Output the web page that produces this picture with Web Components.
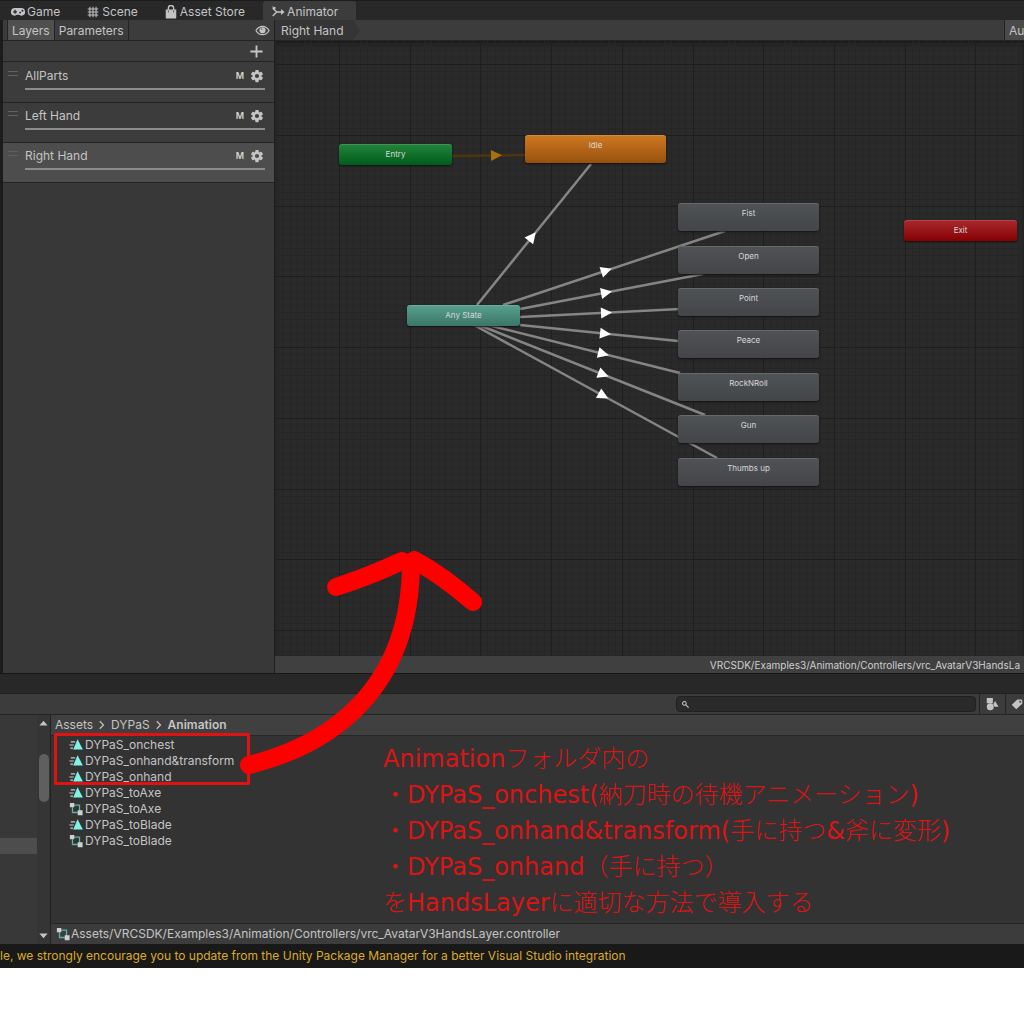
<!DOCTYPE html>
<html lang="en">
<head>
<meta charset="utf-8">
<title>Animator</title>
<style>
  html, body { margin: 0; background: #fff; }
  body { font: 12px/16px Inter, "Liberation Sans", sans-serif; color: #c4c4c4; overflow-x: hidden; }
</style>
</head>
<body>
<editor-window></editor-window>

<script>
const reset = `
  *, *::before, *::after { box-sizing: border-box; }
  button, input { font: inherit; color: inherit; background: none; border: 0; padding: 0; margin: 0; border-radius: 0; outline: 0; }
  a { color: inherit; text-decoration: none; }
`;
function define(name, css, html, setup) {
  const template = document.createElement('template');
  template.innerHTML = `<style>${reset}${css}</style>${html}`;
  customElements.define(name, class extends HTMLElement {
    constructor() {
      super();
      this.attachShadow({ mode: 'open' }).append(template.content.cloneNode(true));
    }
    connectedCallback() { if (setup) setup(this, this.shadowRoot); }
  });
}

/* Icons, all on a 16 x 16 field */
const teeth = [0, 60, 120, 180, 240, 300].map(a =>
  `<rect x="6" y="1" width="4" height="4" rx="1" transform="rotate(${a} 8 8)"/>`).join('');
const icons = {
  game: '<path fill-rule="evenodd" d="M4.500 3.500h7a4.400 4.400 0 0 1 1.500 8.600c-1.800.5-2.800-1.100-3.800-1.100H6.800c-1 0-2 1.600-3.800 1.100A4.400 4.400 0 0 1 4.500 3.500zM3.900 5.500v1.500H2.400v1.500h1.500V10h1.500V8.500h1.500V7H5.400V5.500zM9.400 8.700a1.100 1.100 0 1 0 2.200 0 1.100 1.100 0 0 0-2.200 0zM12 6.500a1.100 1.100 0 1 0 2.200 0 1.100 1.100 0 0 0-2.200 0z"/>',
  grid: '<path d="M4.500 2v12M11.500 2v12M8 2v12M2 4.500h12M2 11.500h12M2 8h12" fill="none" stroke="currentColor" stroke-width="1.200"/>',
  bag: '<path d="M2 5h12v9.500a1 1 0 0 1-1 1H3a1 1 0 0 1-1-1z"/><path d="M5 6V3.500a3 3 0 0 1 6 0V6" fill="none" stroke="currentColor" stroke-width="1.600"/><path d="M5 6v2.500M11 6v2.500" stroke="#555"/>',
  animator: '<path d="M2 3.500L6.500 8 2 12.500M6.500 8H14" fill="none" stroke="currentColor" stroke-width="1.600"/><path d="M1.500 1.500L6 3 3 6zM11.500 4.500L15.500 8l-4 3.500z"/>',
  eye: '<path d="M1 8c3.500-6 10.500-6 14 0-3.500 6-10.500 6-14 0z" fill="none" stroke="currentColor" stroke-width="1.300"/><circle cx="8" cy="7.700" r="3.300"/><circle cx="7" cy="6.500" r="1" fill="#777"/>',
  plus: '<path d="M8 1.500v13M1.500 8h13" stroke="currentColor" stroke-width="2"/>',
  gear: teeth + '<circle cx="8" cy="8" r="3.700" fill="none" stroke="currentColor" stroke-width="2.600"/>',
  search: '<circle cx="6" cy="6" r="3.300" fill="none" stroke="currentColor" stroke-width="1.800"/><path d="M8.500 8.500l5 5" stroke="currentColor" stroke-width="2"/>',
  shapes: '<path d="M2 1h7v6H2zM11.500 4.500L15.500 11h-4.700L9.500 8z"/><circle cx="6" cy="11" r="4"/>',
  tag: '<path fill-rule="evenodd" d="M8.500 2h5.500l1 1v4.500L7 15 1 9zM11 5a1.200 1.200 0 1 0 2.400 0 1.200 1.200 0 0 0-2.400 0z"/>',
  clip: '<path d="M9.800 1.500L15.800 13H4.800z" fill="#7df5df"/><path d="M2 4.500h5M.5 8h5M1.500 11.500h3" stroke="#c9c9c9" stroke-width="1.300"/>',
  controller: '<path d="M5 3.500h7v7M4 6v6h7" fill="none" stroke="#58b5a5" stroke-width="1.500"/><path d="M1 1h5v5H1zM10 9.500h5.500v5.500H10z" fill="#d0d0d0"/>',
  up: '<path d="M8 4l6 7H2z"/>',
  down: '<path d="M8 12l6-7H2z"/>',
  chevron: '<path d="M5 3l5 5-5 5" fill="none" stroke="currentColor" stroke-width="1.600"/>'
};
define('ed-icon',
  `:host { display: inline-flex; flex: none; width: var(--size, 14px); height: var(--size, 14px); }
   svg { width: 100%; height: 100%; fill: currentColor; }`,
  '<svg viewBox="0 0 16 16" aria-hidden="true"></svg>',
  (el, root) => { root.querySelector('svg').innerHTML = icons[el.getAttribute('name')] || ''; });

const placeIcon = (el, root) => {
  root.querySelector('.icon').innerHTML = `<ed-icon name="${el.getAttribute('icon')}"></ed-icon>`;
};

define('dock-tab',
  `:host { display: block; padding-top: 1px; }
   button { display: flex; align-items: center; gap: 2px; height: 20px; padding: 2px 18px 0 8px; border-radius: 3px 3px 0 0; font-size: 12px; white-space: nowrap; }
   .icon { display: flex; }
   :host([selected]) button { background: #3c3c3c; }`,
  '<button type="button" role="tab"><span class="icon"></span><slot></slot></button>',
  (el, root) => {
    placeIcon(el, root);
    root.querySelector('button').setAttribute('aria-selected', el.hasAttribute('selected'));
  });

define('layer-row',
  `:host { display: flex; height: 40px; padding: 4px 9px 0 5px; gap: 7px; background: #3c3c3c; border-bottom: 1px solid #242424; }
   :host([selected]) { background: #4d4d4d; }
   .grip { width: 10px; height: 5px; margin-top: 4px; border: solid #606060; border-width: 1px 0; }
   .body { flex: 1; border-bottom: 2px solid #8c8c8c; height: 23px; }
   .line { display: flex; align-items: center; gap: 6px; height: 18px; }
   .name { flex: 1; font-size: 12px; }
   abbr { font-size: 9px; font-weight: 600; text-decoration: none; color: #d6d6d6; }
   button { display: flex; margin-right: 1px; }`,
  `<span class="grip"></span>
   <div class="body"><div class="line"><span class="name"><slot></slot></span><abbr>M</abbr>
   <button type="button" aria-label="Layer settings"><ed-icon name="gear"></ed-icon></button></div></div>`);

define('layers-panel',
  `:host { display: flex; flex-direction: column; flex: none; width: 275px; background: #383838; border-left: 3px solid #1c1c1c; border-right: 1px solid #1e1e1e; }
   header { display: flex; height: 21px; background: #3c3c3c; border-bottom: 1px solid #242424; padding: 0 4px; }
   header .tab { padding: 1px 4px 0; border-right: 1px solid #242424; font-size: 12px; }
   header .tab.on { background: #505050; border-left: 1px solid #242424; }
   header .eye { display: flex; align-items: center; margin-left: auto; }
   .add { display: flex; justify-content: flex-end; align-items: center; height: 21px; padding-right: 10px; background: #3c3c3c; border-bottom: 1px solid #242424; }
   .add button { display: flex; }
   .rows { padding-top: 1px; background: #3c3c3c; }
   ed-icon { --size: 15px; }`,
  `<header><button type="button" class="tab on">Layers</button><button type="button" class="tab">Parameters</button>
     <button type="button" class="eye" aria-label="Toggle visibility"><ed-icon name="eye"></ed-icon></button></header>
   <div class="add"><button type="button" aria-label="Add layer"><ed-icon name="plus"></ed-icon></button></div>
   <div class="rows"><layer-row>AllParts</layer-row><layer-row>Left Hand</layer-row><layer-row selected>Right Hand</layer-row></div>`);

define('state-node',
  `:host { position: absolute; left: var(--x); top: var(--y); width: 141px; height: 28px; padding-top: 5px; border-radius: 3px; text-align: center; font-size: 8px; line-height: 10px; color: #d8d8d8;
     background: linear-gradient(#505356, #434548); box-shadow: 0 1px 2px #111, inset 0 1px 0 #ffffff22; box-sizing: border-box; }
   :host([kind]) { width: 113px; height: 21px; }
   :host([kind=entry]) { background: linear-gradient(#23843b, #005c1c); }
   :host([kind=any]) { background: linear-gradient(#58a18e, #3b7568); }
   :host([kind=exit]) { background: linear-gradient(#a82a2d, #860003); }
   :host([default]) { background: linear-gradient(#cf7921, #97510e); }`,
  '<slot></slot>');

define('graph-wires',
  ':host { display: block; height: 100%; } svg { display: block; width: 100%; height: 100%; }',
  '<svg aria-hidden="true"></svg>',
  (el, root) => {
    const rule = (n, from, step, skip) => {
      const out = [];
      for (let i = -n; i < n; i++) if (!skip || i % 10) out.push(Math.round(from + i * step));
      return out;
    };
    const grid = (list, dir) => list.filter(v => v >= 0).map(v => dir === 'v' ? `M${v} 0v3000` : `M0 ${v}h4000`).join('');
    const path = (step, n, skip) => grid(rule(n, 64, step, skip), 'v') + grid(rule(n, 94, step, skip), 'h');
    const wires = [
      [202, 264, 316, 123, 257], [228, 264, 450, 190, 331], [245, 268, 428, 233, 331],
      [245, 276, 405, 268, 331], [245, 284, 403, 300, 330], [213, 284, 405, 332, 328],
      [204, 284, 430, 374, 328], [199, 284, 442, 417, 328], [177, 115, 250, 114, 221]
    ];
    const drawn = wires.map(([x1, y1, x2, y2, ax], i) => {
      const t = (ax - x1) / (x2 - x1), ay = y1 + (y2 - y1) * t;
      const a = Math.atan2(y2 - y1, x2 - x1) * 180 / Math.PI;
      const entry = i === wires.length - 1;
      return `<path d="M${x1} ${y1}L${x2} ${y2}" stroke="${entry ? '#4d360b' : '#858585'}" stroke-width="2.500"/>
        <path d="M-5-5.500L6 0-5 5.500z" fill="${entry ? '#a8710f' : '#fff'}" transform="translate(${ax} ${ay}) rotate(${a})"/>`;
    }).join('');
    root.querySelector('svg').innerHTML =
      `<g fill="none" shape-rendering="crispEdges">
        <path d="${path(7.07, 500, true)}" stroke="#262626"/>
        <path d="${path(70.7, 50, false)}" stroke="#1e1e1e"/></g>${drawn}`;
  });

define('state-graph',
  `:host { display: flex; flex-direction: column; flex: 1; min-width: 0; }
   header { display: flex; height: 21px; background: #3c3c3c; border-bottom: 1px solid #242424; }
   .crumb { display: flex; align-items: center; padding: 1px 20px 0 6px; background: #353535; clip-path: polygon(0 0, 78px 0, 85px 50%, 78px 100%, 0 100%); }
   .auto { margin-left: auto; width: 20px; padding: 1px 0 0 4px; text-align: left; background: #4a4a4a; border-left: 1px solid #242424; white-space: nowrap; }
   .canvas { position: relative; height: 615px; overflow: hidden; background: #2a2a2a; box-shadow: inset 0 3px 4px #1b1b1b; }
   footer { height: 17px; background: #404040; font-size: 10px; line-height: 18px; text-align: right; padding-right: 4px; white-space: nowrap; color: #cfcfcf; }`,
  `<header><a class="crumb" href="#right-hand">Right Hand</a><button type="button" class="auto">Au</button></header>
   <div class="canvas"><graph-wires></graph-wires>
     <state-node kind="entry" style="--x:64px;--y:103px">Entry</state-node>
     <state-node default style="--x:250px;--y:94px">Idle</state-node>
     <state-node kind="any" style="--x:132px;--y:264px">Any State</state-node>
     <state-node style="--x:403px;--y:162px">Fist</state-node>
     <state-node style="--x:403px;--y:205px">Open</state-node>
     <state-node style="--x:403px;--y:247px">Point</state-node>
     <state-node style="--x:403px;--y:289px">Peace</state-node>
     <state-node style="--x:403px;--y:332px">RockNRoll</state-node>
     <state-node style="--x:403px;--y:374px">Gun</state-node>
     <state-node style="--x:403px;--y:417px">Thumbs up</state-node>
     <state-node kind="exit" style="--x:629px;--y:179px">Exit</state-node>
   </div>
   <footer>VRCSDK/Examples3/Animation/Controllers/vrc_AvatarV3HandsLa</footer>`);

define('asset-row',
  `:host { display: flex; align-items: center; gap: 2px; height: 16px; padding-left: 18px; font-size: 12px; white-space: nowrap; }
   .icon { display: flex; }`,
  '<span class="icon"></span><slot></slot>', placeIcon);

define('project-panel',
  `:host { display: block; background: #333; border-top: 1px solid #171717; }
   .strip { height: 20px; background: #282828; border-bottom: 1px solid #202020; }
   .tools { display: flex; justify-content: flex-end; align-items: center; height: 21px; background: #3c3c3c; border-bottom: 1px solid #242424; }
   .search { display: flex; align-items: center; width: 300px; height: 16px; margin-right: 3px; padding-left: 4px; gap: 4px; border-radius: 4px; background: #2a2a2a; border: 1px solid #212121; }
   .search ed-icon { --size: 9px; }
   .search input { flex: 1; min-width: 0; height: 14px; }
   .tools button { display: flex; align-items: center; width: 26px; height: 20px; padding-left: 5px; border-left: 1px solid #242424; }
   .tools button:last-child { width: 19px; }
   .tools button ed-icon { --size: 14px; }
   .tools button:last-child ed-icon { --size: 12px; }
   .split { display: flex; height: 229px; }
   .tree { width: 37px; background: #383838; padding-top: 123px; }
   .tree i { display: block; height: 16px; background: #4d4d4d; }
   .bar { display: flex; flex-direction: column; align-items: center; width: 14px; padding: 3px 0; background: #353535; border-right: 1px solid #222; }
   .bar ed-icon { --size: 11px; }
   .bar i { width: 10px; height: 48px; margin: 25px 0 auto; border-radius: 5px; background: #5f5f5f; }
   .files { position: relative; flex: 1; min-width: 0; display: flex; flex-direction: column; }
   nav { display: flex; align-items: center; gap: 3px; height: 21px; padding-left: 4px; background: #404040; border-bottom: 1px solid #262626; }
   nav ed-icon { --size: 12px; }
   nav b { font-weight: 600; }
   .list { flex: 1; padding-top: 1px; }
   footer { display: flex; align-items: center; gap: 1px; height: 21px; padding-left: 5px; background: #3c3c3c; border-top: 1px solid #262626; white-space: nowrap; }`,
  `<div class="strip"></div>
   <div class="tools"><label class="search"><ed-icon name="search"></ed-icon><input type="search" aria-label="Search assets"></label>
     <button type="button" aria-label="Search by type"><ed-icon name="shapes"></ed-icon></button>
     <button type="button" aria-label="Search by label"><ed-icon name="tag"></ed-icon></button></div>
   <div class="split"><div class="tree"><i></i></div>
     <div class="bar"><ed-icon name="up"></ed-icon><i></i><ed-icon name="down"></ed-icon></div>
     <div class="files"><nav><a href="#assets">Assets</a><ed-icon name="chevron"></ed-icon><a href="#dypas">DYPaS</a><ed-icon name="chevron"></ed-icon><a href="#animation"><b>Animation</b></a></nav>
       <div class="list">
         <asset-row icon="clip">DYPaS_onchest</asset-row>
         <asset-row icon="clip">DYPaS_onhand&amp;transform</asset-row>
         <asset-row icon="clip">DYPaS_onhand</asset-row>
         <asset-row icon="clip">DYPaS_toAxe</asset-row>
         <asset-row icon="controller">DYPaS_toAxe</asset-row>
         <asset-row icon="clip">DYPaS_toBlade</asset-row>
         <asset-row icon="controller">DYPaS_toBlade</asset-row>
       </div>
       <slot></slot>
       <footer><ed-icon name="controller"></ed-icon>Assets/VRCSDK/Examples3/Animation/Controllers/vrc_AvatarV3HandsLayer.controller</footer></div></div>`);

define('red-note',
  `:host { position: absolute; left: 332px; top: 26px; font: 24px/36px "DejaVu Sans", "Noto Sans CJK JP Light", "Noto Sans CJK JP", sans-serif; color: #dc1414; white-space: nowrap; }
   p { margin: 0; height: 36px; }`,
  `<p>Animationフォルダ内の</p>
   <p>・DYPaS_onchest(納刀時の待機アニメーション)</p>
   <p>・DYPaS_onhand&amp;transform(手に持つ&amp;斧に変形)</p>
   <p>・DYPaS_onhand（手に持つ）</p>
   <p>をHandsLayerに適切な方法で導入する</p>`);

define('red-marks',
  `:host { position: absolute; left: 0; top: 0; pointer-events: none; }
   svg { display: block; }`,
  `<svg width="500" height="800" fill="none" stroke-linecap="round" stroke-linejoin="round" aria-hidden="true">
     <rect x="55.500" y="734.500" width="193" height="49" stroke="#e01212" stroke-width="3"/>
     <g stroke="#f00" stroke-width="18"><path d="M249 765C330 745 411 690 411 562"/><path d="M336 587Q370 576 402 561"/><path d="M414 560Q442 575 473 602"/></g></svg>`);

define('editor-window',
  `:host { display: block; position: relative; background: #282828; }
   .tabs { display: flex; height: 20px; padding-left: 3px; background: #282828; border-top: 1px solid #1c1c1c; }
   .tabs dock-tab { margin-top: -1px; }
   .main { display: flex; }
   .status { height: 24px; background: #191919; color: #d9ab2b; line-height: 24px; white-space: nowrap; }`,
  `<div class="tabs" role="tablist"><dock-tab icon="game">Game</dock-tab><dock-tab icon="grid">Scene</dock-tab><dock-tab icon="bag">Asset Store</dock-tab><dock-tab icon="animator" selected>Animator</dock-tab></div>
   <div class="main"><layers-panel></layers-panel><state-graph></state-graph></div>
   <project-panel><red-note></red-note></project-panel>
   <div class="status">le, we strongly encourage you to update from the Unity Package Manager for a better Visual Studio integration</div>
   <red-marks></red-marks>`);
</script>
</body>
</html>
